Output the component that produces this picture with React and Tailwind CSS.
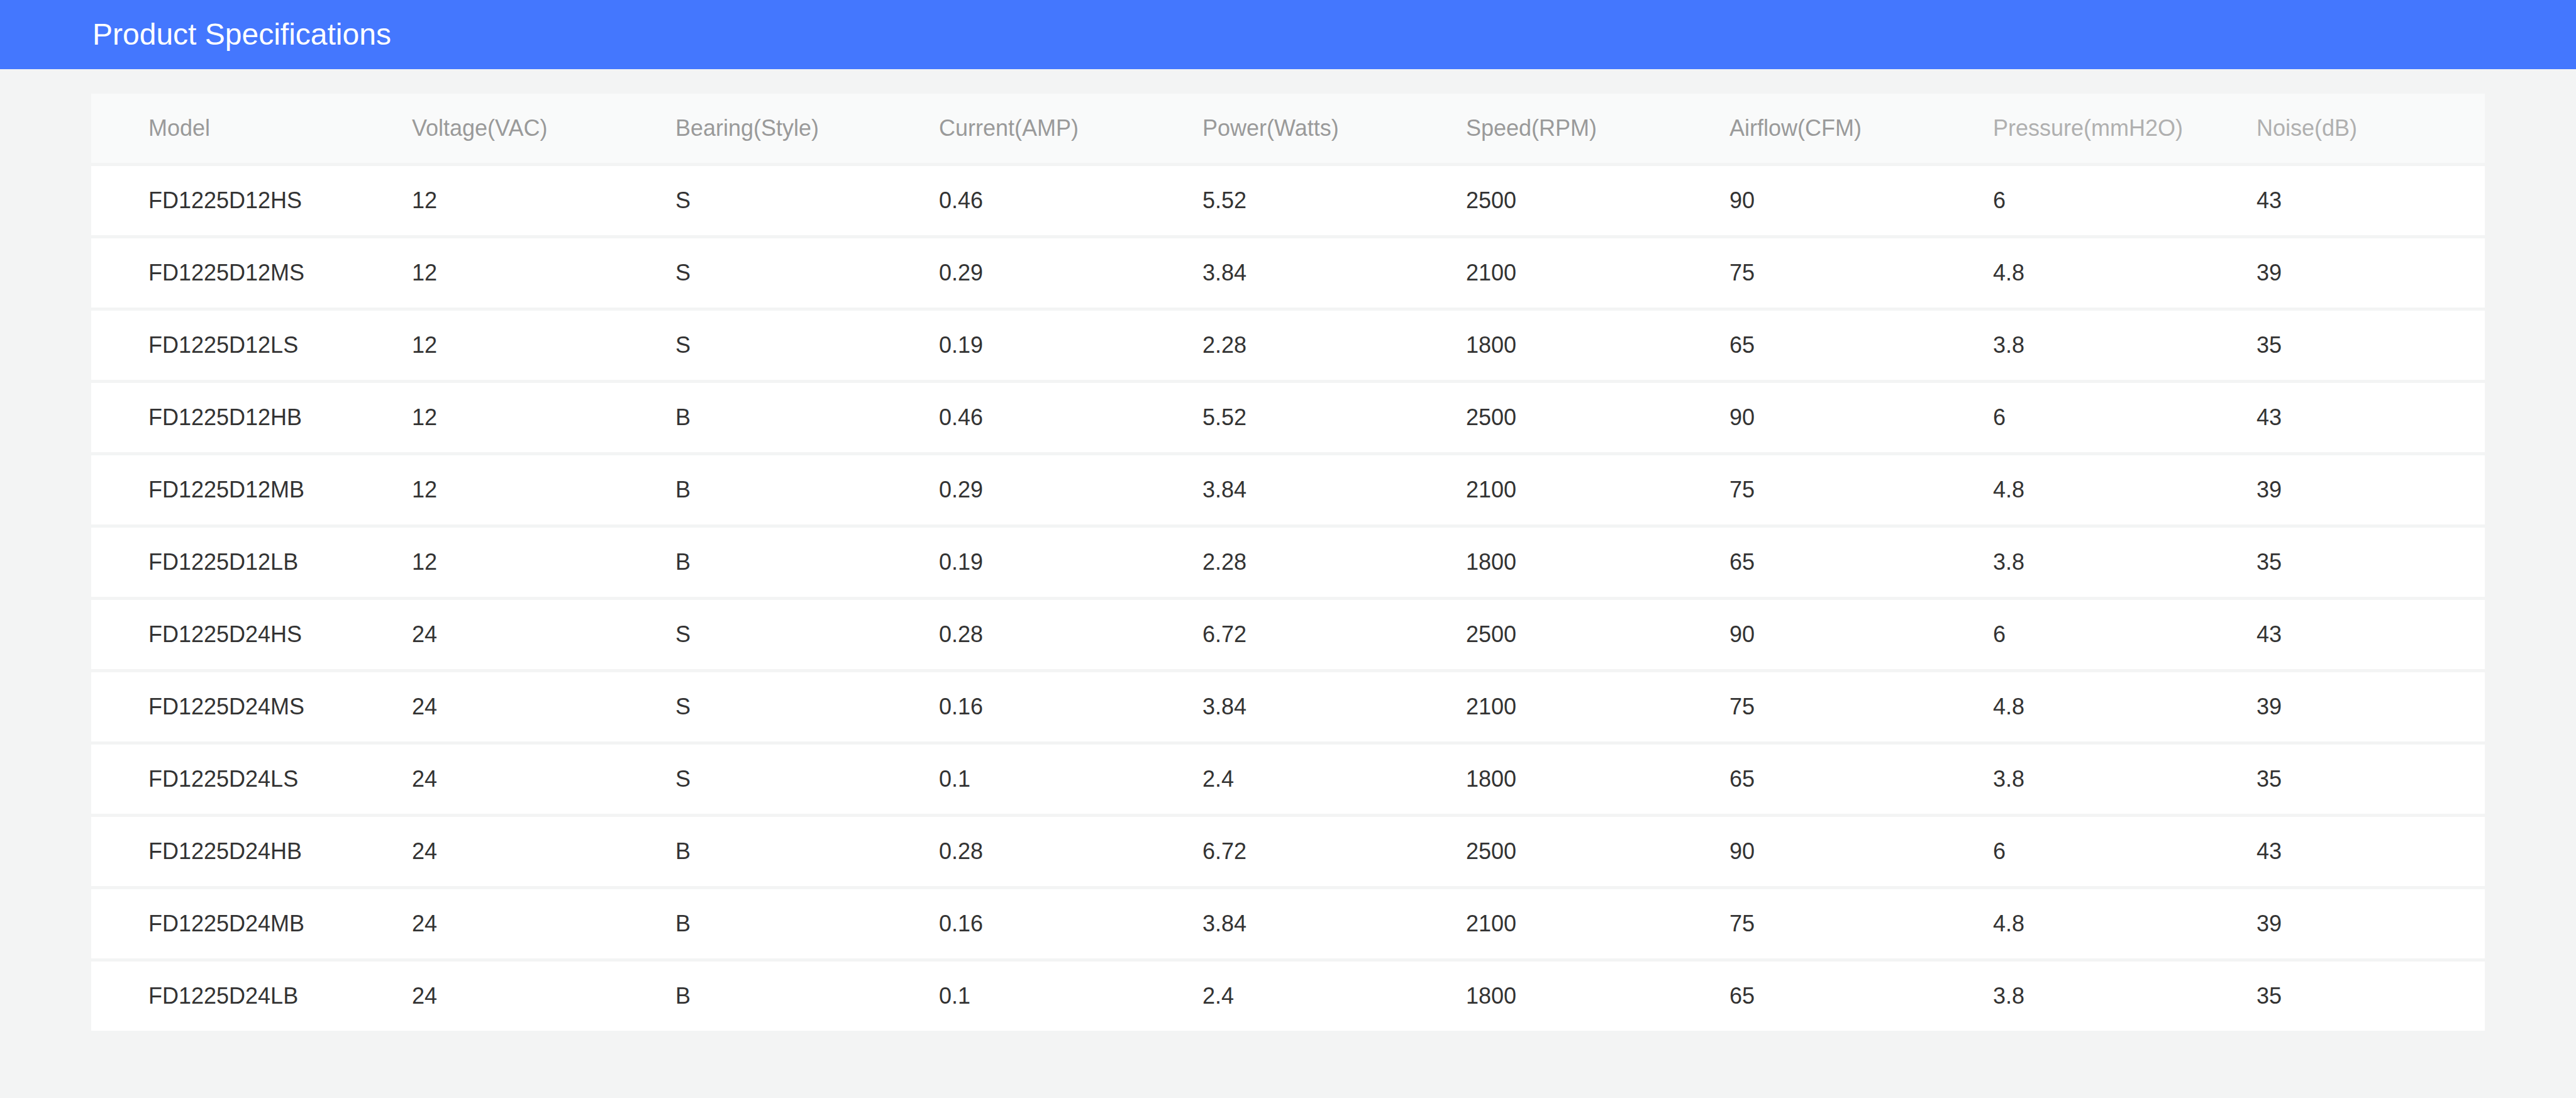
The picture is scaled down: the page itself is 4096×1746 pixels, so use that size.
import React from "react";

// spec rows for the FD1225 fan series
const columns = [
  "Model",
  "Voltage(VAC)",
  "Bearing(Style)",
  "Current(AMP)",
  "Power(Watts)",
  "Speed(RPM)",
  "Airflow(CFM)",
  "Pressure(mmH2O)",
  "Noise(dB)",
];

const rows = [
  ["FD1225D12HS", "12", "S", "0.46", "5.52", "2500", "90", "6", "43"],
  ["FD1225D12MS", "12", "S", "0.29", "3.84", "2100", "75", "4.8", "39"],
  ["FD1225D12LS", "12", "S", "0.19", "2.28", "1800", "65", "3.8", "35"],
  ["FD1225D12HB", "12", "B", "0.46", "5.52", "2500", "90", "6", "43"],
  ["FD1225D12MB", "12", "B", "0.29", "3.84", "2100", "75", "4.8", "39"],
  ["FD1225D12LB", "12", "B", "0.19", "2.28", "1800", "65", "3.8", "35"],
  ["FD1225D24HS", "24", "S", "0.28", "6.72", "2500", "90", "6", "43"],
  ["FD1225D24MS", "24", "S", "0.16", "3.84", "2100", "75", "4.8", "39"],
  ["FD1225D24LS", "24", "S", "0.1", "2.4", "1800", "65", "3.8", "35"],
  ["FD1225D24HB", "24", "B", "0.28", "6.72", "2500", "90", "6", "43"],
  ["FD1225D24MB", "24", "B", "0.16", "3.84", "2100", "75", "4.8", "39"],
  ["FD1225D24LB", "24", "B", "0.1", "2.4", "1800", "65", "3.8", "35"],
];

const gridCols = "grid grid-cols-[repeat(8,419px)_1fr] items-center pl-[91px]";

const App = () => {
  return (
    <div className="min-h-[1746px] bg-[#f3f4f4] font-['Liberation_Sans',Arial,sans-serif]">
      {/* Title bar */}
      <div className="h-[110px] bg-[#4477fe] flex items-center px-[147px]">
        <h1 className="text-white text-[48px] leading-none">Product Specifications</h1>
      </div>

      {/* Spec table */}
      <div className="mx-[145px] mt-[39px] flex flex-col gap-[5px]">
        <div className={`${gridCols} h-[110px] bg-[#f9fafa] text-[36px]`}>
          {columns.map((col, i) => (
            <div key={col} className={i > 6 ? "text-[#b0b0b0]" : "text-[#9a9a9a]"}>
              {col}
            </div>
          ))}
        </div>
        {rows.map((row) => (
          <div key={row[0]} className={`${gridCols} h-[110px] bg-white text-[36px] text-[#333333]`}>
            {row.map((cell, i) => (
              <div key={i}>{cell}</div>
            ))}
          </div>
        ))}
      </div>
    </div>
  );
};

export default App;
